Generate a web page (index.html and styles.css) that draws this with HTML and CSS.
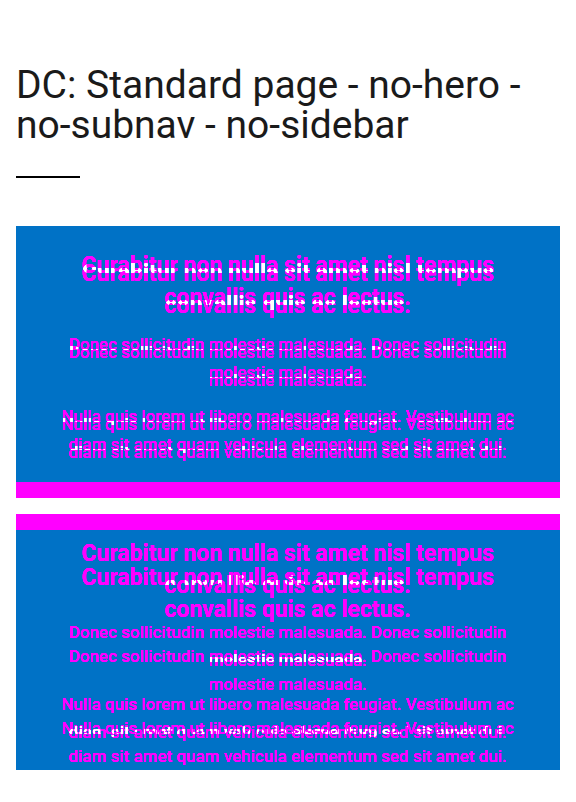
FILE: index.html
```html
<!DOCTYPE html>
<html lang="en">
<head>
<meta charset="utf-8">
<meta name="viewport" content="width=device-width, initial-scale=1">
<title>DC: Standard page</title>
<link rel="stylesheet" href="styles.css">
</head>
<body>
<main class="page">
  <header class="page-header">
    <h1 class="title">DC: Standard page - no-hero -<br>no-subnav - no-sidebar</h1>
  </header>
  <section class="card card-before">
    <div class="stack">
      <div class="layer">
        <h2>Curabitur non nulla sit amet nisl tempus convallis quis ac lectus.</h2>
        <p>Donec sollicitudin molestie malesuada. Donec sollicitudin molestie malesuada.</p>
        <p>Nulla quis lorem ut libero malesuada feugiat. Vestibulum ac diam sit amet quam vehicula elementum sed sit amet dui.</p>
      </div>
      <div class="layer layer-shifted">
        <h2>Curabitur non nulla sit amet nisl tempus convallis quis ac lectus.</h2>
        <p>Donec sollicitudin molestie malesuada. Donec sollicitudin molestie malesuada.</p>
        <p>Nulla quis lorem ut libero malesuada feugiat. Vestibulum ac diam sit amet quam vehicula elementum sed sit amet dui.</p>
      </div>
    </div>
  </section>
  <section class="card card-after">
    <div class="stack">
      <div class="layer">
        <h2>Curabitur non nulla sit amet nisl tempus convallis quis ac lectus.</h2>
        <p>Donec sollicitudin molestie malesuada. Donec sollicitudin molestie malesuada.</p>
        <p>Nulla quis lorem ut libero malesuada feugiat. Vestibulum ac diam sit amet quam vehicula elementum sed sit amet dui.</p>
      </div>
      <div class="layer layer-shifted">
        <h2>Curabitur non nulla sit amet nisl tempus convallis quis ac lectus.</h2>
        <p>Donec sollicitudin molestie malesuada. Donec sollicitudin molestie malesuada.</p>
        <p>Nulla quis lorem ut libero malesuada feugiat. Vestibulum ac diam sit amet quam vehicula elementum sed sit amet dui.</p>
      </div>
    </div>
  </section>
</main>
</body>
</html>
```

FILE: styles.css
```css
* {
  box-sizing: border-box;
}

body {
  margin: 0;
  background: #fff;
  color: #1a1a1a;
  font-family: Roboto, "Liberation Sans", sans-serif;
}

.page {
  padding: 65px 16px 32px;
}

.page-header {
  margin-bottom: 48px;
}

.title {
  margin: 0;
  font-size: 39px;
  font-weight: 400;
  line-height: 40px;
}

.page-header::after {
  content: "";
  display: block;
  width: 64px;
  height: 2px;
  margin-top: 31px;
  background: #000;
}

.card {
  background: #0072c6;
}

.card-before {
  padding: 24px 32px 16px;
  border-bottom: 16px solid #f0f;
}

.card-after {
  margin-top: 16px;
  padding: 8px 32px 0;
  border-top: 16px solid #f0f;
}

/* Two copies are combined by difference, then inverted:
   a single copy is magenta and shared pixels are white. */
.stack {
  display: grid;
  max-width: 480px;
  margin: 0 auto;
  isolation: isolate;
  filter: invert(1);
}

.layer {
  grid-area: 1 / 1;
  color: #0f0;
  text-align: center;
  text-shadow: 0 0 0 #0f0, 0 0 0 #0f0, 0 0 0 #0f0;
  mix-blend-mode: difference;
}

.card-before .layer-shifted {
  margin-top: 8px;
}

.card-after .layer-shifted {
  margin-top: 24px;
}

.layer h2 {
  margin: 0;
  font-size: 23px;
  font-weight: 700;
  line-height: 32px;
}

.layer p {
  margin: 16px 0 0;
  font-size: 17px;
  font-weight: 500;
  line-height: 28px;
}
```
